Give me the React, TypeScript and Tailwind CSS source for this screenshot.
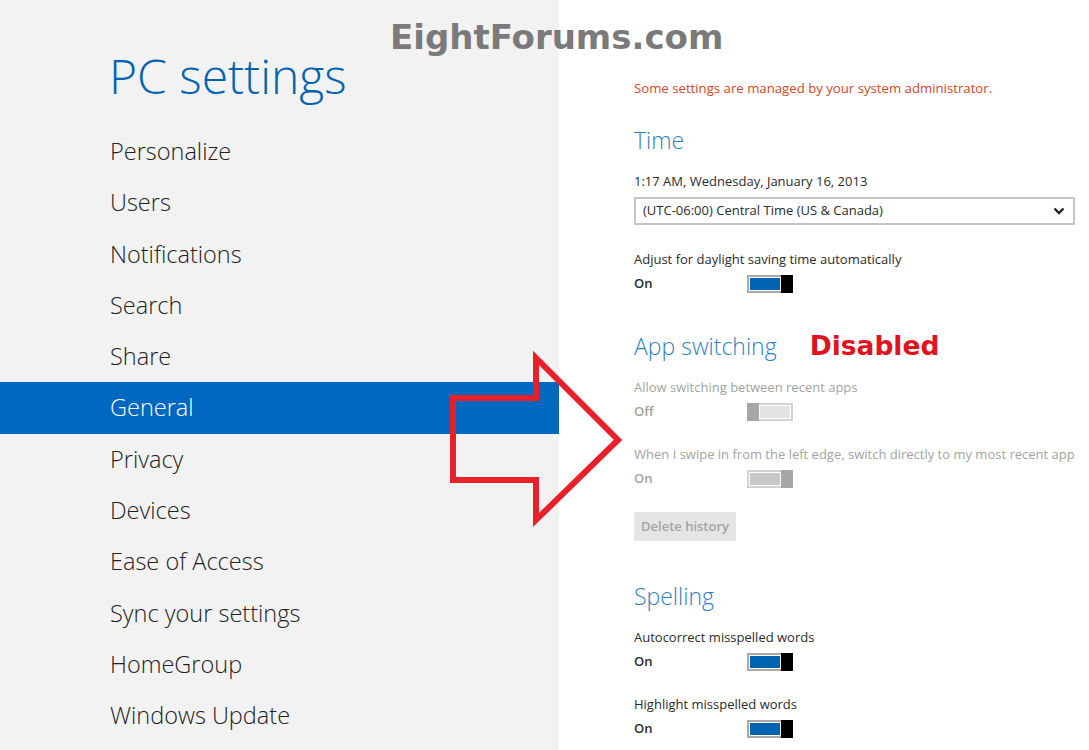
const nav = [
  'Personalize',
  'Users',
  'Notifications',
  'Search',
  'Share',
  'General',
  'Privacy',
  'Devices',
  'Ease of Access',
  'Sync your settings',
  'HomeGroup',
  'Windows Update',
]

function Toggle({ state }: { state: 'on' | 'off' | 'dis-on' }) {
  if (state === 'on') {
    return (
      <div className="flex h-[18px] w-[46px] border-2 border-[#a9a9a9] bg-white">
        <div className="m-[1px] flex-1 bg-[#0063b1]" />
        <div className="-my-[2px] -mr-[2px] w-[12px] bg-black" />
      </div>
    )
  }
  if (state === 'off') {
    return (
      <div className="flex h-[18px] w-[46px] border-2 border-[#d2d2d2] bg-white">
        <div className="-my-[2px] -ml-[2px] w-[12px] bg-[#a6a6a6]" />
        <div className="m-[1px] flex-1 bg-[#e3e3e3]" />
      </div>
    )
  }
  return (
    <div className="flex h-[18px] w-[46px] border-2 border-[#d2d2d2] bg-white">
      <div className="m-[1px] flex-1 bg-[#c8c8c8]" />
      <div className="-my-[2px] -mr-[2px] w-[12px] bg-[#a6a6a6]" />
    </div>
  )
}

function Setting({
  label,
  value,
  state,
  dim,
}: {
  label: string
  value: string
  state: 'on' | 'off' | 'dis-on'
  dim?: boolean
}) {
  return (
    <div className={dim ? 'text-[#a3a3a3]' : 'text-[#2b2b2b]'}>
      <div className="h-[22px] text-[13px] leading-[22px]">{label}</div>
      <div className="mt-[4px] flex h-[20px] items-center">
        <span className="w-[113px] text-[13px] font-semibold">{value}</span>
        <Toggle state={state} />
      </div>
    </div>
  )
}

export default function App() {
  return (
    <div
      className="relative flex h-[750px] w-[1089px] overflow-hidden bg-white"
      style={{ fontFamily: '"Open Sans", "Noto Sans", sans-serif' }}
    >
      {/* left menu */}
      <aside className="w-[559px] shrink-0 bg-[#f2f2f2]">
        <h1 className="ml-[109px] mt-[45px] h-[70px] text-[48px] font-light leading-[62px] text-[#0063b1]">
          PC settings
        </h1>
        <ul className="mt-[11px]">
          {nav.map((n) => (
            <li
              key={n}
              className={
                'h-[51.3px] pl-[110px] text-[23.5px] font-light leading-[51px] ' +
                (n === 'General' ? 'bg-[#0068c0] text-white' : 'text-[#222]')
              }
            >
              {n}
            </li>
          ))}
        </ul>
      </aside>

      {/* right pane */}
      <main className="flex-1 pl-[75px] pr-[14px] pt-[78px]">
        <p className="text-[13.2px] leading-[20px] text-[#d24726]">
          Some settings are managed by your system administrator.
        </p>

        <h2 className="mt-[26px] text-[23px] font-light leading-[32px] text-[#2f80c0]">Time</h2>
        <div className="mt-[15px] text-[13px] leading-[20px] text-[#2b2b2b]">
          1:17 AM, Wednesday, January 16, 2013
        </div>
        <div className="mt-[6px] flex h-[28px] items-center justify-between border-2 border-[#c4c4c4] pl-[7px] pr-[8px] text-[13px] text-[#2b2b2b]">
          <span>(UTC-06:00) Central Time (US &amp; Canada)</span>
          <svg width="12" height="8" viewBox="0 0 12 8">
            <path d="M1.5 1.5 L6 6 L10.5 1.5" fill="none" stroke="#222" strokeWidth="2.4" />
          </svg>
        </div>
        <div className="mt-[23px]">
          <Setting label="Adjust for daylight saving time automatically" value="On" state="on" />
        </div>

        <div className="mt-[36px] flex items-center">
          <h2 className="text-[23px] font-light leading-[32px] text-[#2f80c0]">App switching</h2>
          <span
            className="ml-[33px] text-[26.5px] font-bold leading-[32px] text-[#e0141e]"
            style={{ fontFamily: '"DejaVu Sans", Verdana, sans-serif' }}
          >
            Disabled
          </span>
        </div>
        <div className="mt-[14px]">
          <Setting label="Allow switching between recent apps" value="Off" state="off" dim />
        </div>
        <div className="mt-[21px]">
          <Setting
            label="When I swipe in from the left edge, switch directly to my most recent app"
            value="On"
            state="dis-on"
            dim
          />
        </div>
        <button className="mt-[23px] h-[29px] bg-[#e5e5e5] px-[7px] text-[13px] font-semibold text-[#a3a3a3]">
          Delete history
        </button>

        <h2 className="mt-[39px] text-[23px] font-light leading-[32px] text-[#2f80c0]">Spelling</h2>
        <div className="mt-[14px]">
          <Setting label="Autocorrect misspelled words" value="On" state="on" />
        </div>
        <div className="mt-[21px]">
          <Setting label="Highlight misspelled words" value="On" state="on" />
        </div>
      </main>

      {/* watermark */}
      <div
        className="absolute left-[390px] top-[15px] text-[34px] font-bold leading-[44px] text-[#7a7a7a]"
        style={{ fontFamily: '"DejaVu Sans", Verdana, sans-serif' }}
      >
        EightForums.com
      </div>

      {/* red arrow annotation */}
      <svg className="absolute left-0 top-0" width="1089" height="750">
        <polygon
          points="453,398 536,398 536,358 618,440 536,520 536,480 453,480"
          fill="none"
          stroke="#e8202a"
          strokeWidth="6"
          strokeLinejoin="miter"
        />
      </svg>
    </div>
  )
}
